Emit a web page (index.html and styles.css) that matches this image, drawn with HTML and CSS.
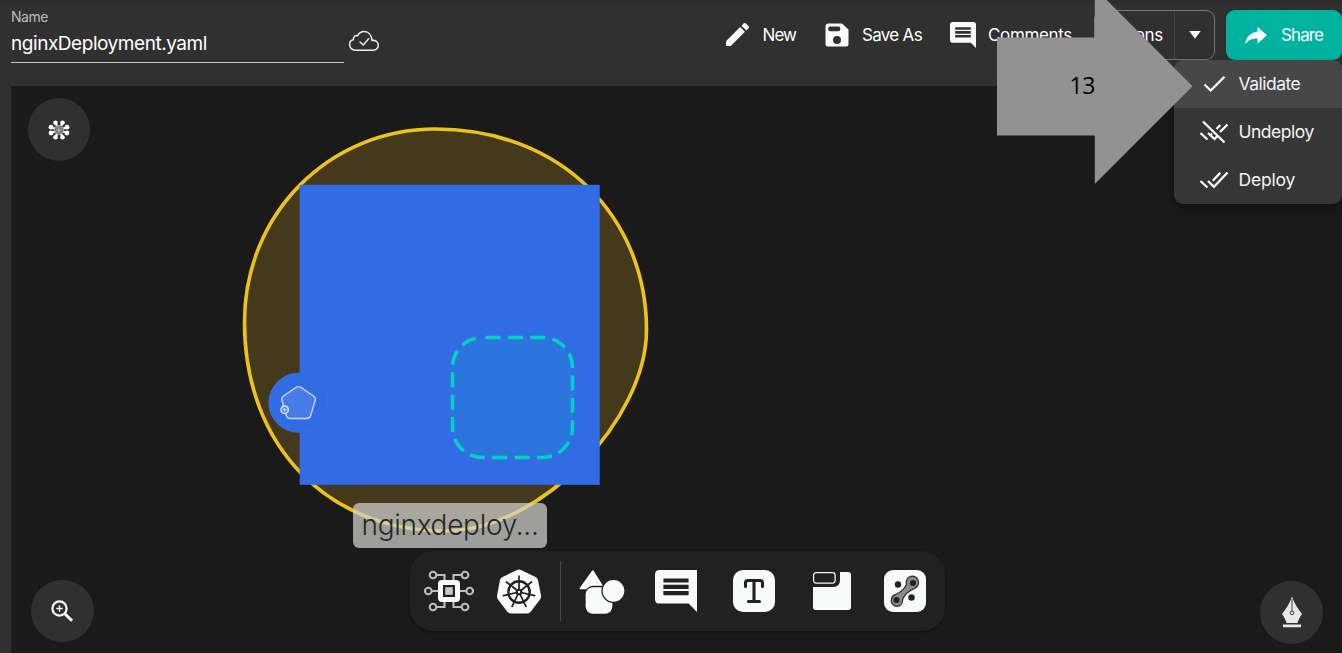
FILE: index.html
```html
<!DOCTYPE html>
<html lang="en">
<head>
<meta charset="utf-8">
<title>nginxDeployment.yaml</title>
<link rel="stylesheet" href="styles.css">
</head>
<body>
<div class="app">
  <header class="topbar">
    <div class="name-field">
      <span class="name-label">Name</span>
      <span class="name-value">nginxDeployment.yaml</span>
    </div>
    <svg class="cloud" viewBox="0 0 32 22" width="32" height="22"><path d="M7.5 20.2H25a5 5 0 0 0 .6-10c-.6 0-1 0-1.6.3C23.500 5 20.500 1.500 16.300 1.500c-3.300 0-5.500 1.700-6.600 4.200C6.800 5 5.300 7.200 5.300 9.800 3 10.300 1.600 12.500 1.600 14.600c0 3.200 2.600 5.600 5.900 5.600z"/><path d="M12 12l3.300 3 5.300-6.200"/></svg>
    <nav class="actions">
      <button class="tool new"><svg viewBox="3 3 18 18" width="23" height="23"><path d="M3 17.250V21h3.750L17.810 9.940l-3.750-3.750L3 17.250zM20.710 7.040a1 1 0 0 0 0-1.410l-2.340-2.340a1 1 0 0 0-1.410 0l-1.830 1.830 3.750 3.750 1.830-1.830z"/></svg><span>New</span></button>
      <button class="tool save"><svg viewBox="0 0 24 24" width="24" height="24"><path fill-rule="evenodd" d="M3.500 .5H17l6.500 6V21a2.500 2.500 0 0 1-2.500 2.500H3A2.500 2.500 0 0 1 .5 21V3.500a3 3 0 0 1 3-3zM5.500 3.500a2.400 2.400 0 0 0 0 4.800h7.500a2.400 2.400 0 0 0 0-4.800zM12 13a4 4 0 1 0 0 8 4 4 0 0 0 0-8z"/></svg><span>Save As</span></button>
      <button class="tool comments"><svg viewBox="2 2 20 20" width="26" height="26"><path d="M21.990 4c0-1.100-.89-2-1.990-2H4c-1.100 0-2 .9-2 2v12c0 1.100.9 2 2 2h14l4 4-.01-18zM18 14H6v-2h12v2zm0-3H6V9h12v2zm0-3H6V6h12v2z"/></svg><span>Comments</span></button>
      <div class="split"><button class="split-main">Actions</button><button class="split-arrow"><svg viewBox="0 0 12 8" width="12" height="8"><path d="M.3 0h11.400L6 7.800z"/></svg></button></div>
      <button class="share"><svg viewBox="0 0 24 19" width="24" height="19"><path d="M13.500 .8L23 9.200l-9.500 8.500v-5.200C7.500 12.500 4 14.500 .8 18.500 2 11.800 6 6.500 13.500 5.600z"/></svg><span>Share</span></button>
    </nav>
  </header>

  <main class="canvas">
    <svg class="diagram" viewBox="11 86 1331 567" width="1331" height="567">
      <path class="blob" d="M244.500 322C244.500 213 330 129 435 129C562 129 646.500 218 646.500 330C646.500 419 541 531 445 531C330 531 244.500 448 244.500 322Z"/>
      <rect x="299.700" y="184.800" width="300" height="300" fill="#326ce5"/>
      <rect class="slot" x="452.500" y="337.500" width="120" height="120" rx="30"/>
      <circle cx="298.500" cy="402.800" r="29.500" fill="#326ce5" stroke="#3970e8"/>
      <path class="pod" d="M296.500 387.200q2-1.200 4 0l13 8.800q2.300 1.600 1.800 4l-4.600 15.500q-.9 3-4 3H290q-2.500 0-3.500-2.500l-4.500-15.500q-.8-3 1.500-4.500z"/>
      <circle cx="284.600" cy="409.700" r="3.700" fill="#5c88e9" stroke="#dce6fb" stroke-width="1.500"/><path d="M282.700 409.700h3.800M284.600 408v3.500" stroke="#e5ecfc" stroke-width=".8"/>
    </svg>
    <div class="node-label">nginxdeploy...</div>

    <button class="round layers"><svg viewBox="-12 -12 24 24" width="24" height="24"><g fill="#fff"><circle cx="-3.500" cy="-7.300" r="2.300"/><circle cx="3.500" cy="-7.300" r="2.300"/><circle cx="-3.500" cy="7.300" r="2.300"/><circle cx="3.500" cy="7.300" r="2.300"/><circle cx="-8" cy="-2.800" r="2.400"/><circle cx="-8" cy="3" r="2.400"/><circle cx="8" cy="-2.800" r="2.400"/><circle cx="8" cy="3" r="2.400"/></g><path d="M-3.500-7L3.500 7M3.500-7L-3.500 7M-8-2.800L8 3M-8 3L8-2.800" stroke="#fff" stroke-width="2.200"/><circle r="5" fill="#aaa"/><g fill="none" stroke="#666" stroke-width=".8"><circle r="3.700"/><path d="M-2-2h4v4h-4z"/></g></svg></button>
    <button class="round zoom"><svg viewBox="0 0 24 24" width="24" height="24"><g fill="none" stroke="#fff"><circle cx="9.500" cy="9.500" r="7.100" stroke-width="2.200"/><path d="M14.500 14.500l7.500 7.300" stroke-width="3"/><path d="M6.300 9.500h6.400M9.500 6.300v6.400" stroke-width="1.300"/></g></svg></button>
    <button class="round pen"><svg viewBox="0 0 22 32" width="22" height="32"><path fill="#e8e8e8" d="M11 .5C13 7 17 13 21 18c-2 2.500-3.500 5.500-4.500 9h-11C4.500 23.500 3 20.500 1 18 5 13 9 7 11 .5zM2 28.500h18v2.800H2z"/><path d="M11 3v12" stroke="#444" stroke-width="1"/><circle cx="11" cy="16.800" r="1.800" fill="#e8e8e8" stroke="#333"/></svg></button>

    <div class="dock">
      <svg class="d-components" viewBox="0 0 50 42" width="50" height="42"><g fill="none" stroke="#bdbdbd" stroke-width="2.100"><path d="M12.500 5h8v7M37.500 5h-8v7M12.500 37h8v-7M37.500 37h-8v-7M8 21h7M35 21h7"/><circle cx="9" cy="5" r="3.300"/><circle cx="41" cy="5" r="3.300"/><circle cx="9" cy="37" r="3.300"/><circle cx="41" cy="37" r="3.300"/><circle cx="4.300" cy="21" r="3.300"/><circle cx="45.700" cy="21" r="3.300"/></g><rect x="14" y="10" width="22" height="22" rx="4" fill="#f7faf9"/><rect x="19" y="15" width="12" height="12" fill="#212121"/><rect x="21.200" y="17.200" width="7.600" height="7.600" fill="#c9c9c9"/></svg>
      <svg class="d-kube" viewBox="-22 -22.500 44 45" width="44" height="45"><path d="M-2-21.500q2-1 4 0l14.500 7q2 1 2.500 3L22 4q.4 2-1 4L11.500 20.500q-1.500 1.500-4 1.500h-15q-2.500 0-4-1.500L-21 8q-1.400-2-1-4l3-15.500q.5-2 2.500-3z" fill="#f7faf9"/><g fill="none" stroke="#212121"><circle cy=".5" r="10.700" stroke-width="2.400"/><path stroke-width="1.700" stroke-linecap="round" d="M0 .5V-15.500M0 .5L12.500-9.500M0 .5L15.600 4.100M0 .5L6.900 14.900M0 .5L-6.900 14.900M0 .5L-15.600 4.100M0 .5L-12.500-9.500"/></g><circle cy=".5" r="3.300" fill="#212121"/><circle cy=".5" r="1.200" fill="#f7faf9"/></svg>
      <i class="sep"></i>
      <svg class="d-shapes" viewBox="0 0 46 46" width="46" height="46"><g fill="#f7faf9" stroke="#212121" stroke-width="1.300"><path d="M12.500 1.500q1.300-2 2.600 0L25.500 18q1.500 3-1 3H2q-3-.5-1.500-3z"/><rect x="6" y="17.500" width="28" height="28" rx="8"/><circle cx="34.500" cy="21.800" r="11.500"/></g></svg>
      <svg class="d-comment" viewBox="2 2 20 20" width="42" height="42" fill="#f7faf9"><path d="M22 2H4c-1.200 0-2 .8-2 2v12c0 1.200.8 2 2 2h14l4 4zM18 14H6v-2h12zM18 11H6V9h12zM18 8H6V6h12z"/></svg>
      <svg class="d-text" viewBox="0 0 42 42" width="42" height="42"><rect width="42" height="42" rx="10" fill="#f7faf9"/><path d="M12.500 16.500v-3.500q0-2.500 2.500-2.500h12q2.500 0 2.500 2.500v3.500M21 10.500v21M15.500 31.500h11" fill="none" stroke="#212121" stroke-width="3.100" stroke-linecap="round"/></svg>
      <svg class="d-group" viewBox="0 0 38 38" width="38" height="38"><path fill="#f7faf9" d="M27 0h8q3 0 3 3v32q0 3-3 3H3q-3 0-3-3V15h20q7 0 7-7z"/><rect x=".6" y=".6" width="21.500" height="10.500" rx="2.500" fill="#212121" stroke="#f7faf9" stroke-width="1.200"/></svg>
      <svg class="d-edge" viewBox="0 0 42 42" width="42" height="42"><rect width="42" height="42" rx="9" fill="#f7faf9"/><g fill="#212121"><circle cx="14" cy="14.500" r="3.200"/><circle cx="27.500" cy="27.500" r="3.200"/></g><path d="M7.500 29a5.500 5.500 0 0 1 4-4.500q7-2.500 11-10a6.200 6.200 0 1 1 8 3.800q-9 4-12 11.200a5.700 5.700 0 1 1-11-.5z" fill="#8b8b8b" stroke="#333" stroke-width="1.300"/><circle cx="12.500" cy="30" r="3.100" fill="#212121"/><circle cx="29" cy="13" r="3.100" fill="#212121"/></svg>
    </div>
  </main>

  <ul class="menu">
    <li class="active"><svg viewBox="0 0 30 24" width="30" height="24"><path d="M5.500 12.500l6.200 6L25.500 4.700"/></svg><span class="m1">Validate</span></li>
    <li><svg viewBox="0 0 30 24" width="30" height="24"><path d="M1.500 13l7 6.500M9 13l6.500 6 3-3M21 12l7.500-7.500M12 14.500l1-1M17.500 9l3.800-4M4 1.500L25.500 22.500"/></svg><span class="m2">Undeploy</span></li>
    <li><svg viewBox="0 0 30 24" width="30" height="24"><path d="M1.500 13l7 6.500M9 13l6 5.800L28.500 4.500M13.800 12.800l7.500-8"/></svg><span class="m3">Deploy</span></li>
  </ul>

  <div class="callout"><svg viewBox="997 0 196 185" width="196" height="185"><path fill="#929292" d="M997 37.500H1094.800V-12L1192.500 86.200 1094.800 184V135.500H997z"/></svg><span>13</span></div>
</div>
</body>
</html>
```
FILE: styles.css
```css
* { box-sizing: border-box; }
body { margin: 0; background: #303030; font-family: Inter, "Open Sans", sans-serif; color: #fff; overflow: hidden; }
button { background: none; border: 0; padding: 0; color: inherit; font: inherit; letter-spacing: inherit; }
svg { display: block; flex: none; }
span { white-space: nowrap; }
.app { position: relative; width: 1342px; height: 653px; overflow: hidden; display: flex; flex-direction: column; }

.topbar { height: 86px; flex: none; display: flex; align-items: flex-start; padding-left: 11px; background: linear-gradient(#2b2b2b, #303030 5px); }
.name-field { width: 333px; height: 63px; border-bottom: 1px solid #c8c8c8; padding-top: 9px; display: flex; flex-direction: column; }
.name-label { font-size: 14px; line-height: 16px; color: #bdbdbd; letter-spacing: -.45px; }
.name-value { font-size: 19px; line-height: 24px; margin-top: 7px; letter-spacing: -.45px; }
.cloud { margin: 30px 0 0 4px; fill: none; stroke: #eee; stroke-width: 1.500; stroke-linecap: round; stroke-linejoin: round; }
.actions { display: flex; margin: 10px 0 0 auto; height: 50px; font-size: 17px; }
.actions svg { fill: #f7faf9; }
.tool { display: flex; align-items: center; height: 49px; }
.new { width: 99.500px; gap: 14px; letter-spacing: -.9px; }
.save { width: 125px; gap: 13px; letter-spacing: -.7px; }
.comments { width: 144px; gap: 12px; letter-spacing: -.35px; }
.split { display: flex; width: 121px; height: 50px; border: 1px solid #777; border-radius: 9px; margin-right: 11px; }
.split-main { width: 80px; padding-right: 11px; text-align: right; border-right: 1px solid #3f4555; letter-spacing: -.3px; }
.split-arrow { flex: 1; display: grid; place-items: center; }
.share { display: flex; align-items: center; gap: 13px; width: 116px; padding-left: 18px; background: #00b39f; border-radius: 9px; letter-spacing: -.9px; }

.canvas { position: relative; flex: 1; margin-left: 11px; background: #1a1a1a; overflow: hidden; }
.blob { fill: #443a1b; stroke: #edc31b; stroke-width: 3.600; }
.slot { fill: #2c75df; stroke: #00d3c0; stroke-width: 3.500; stroke-dasharray: 15 7.400; stroke-dashoffset: -3; }
.pod { fill: #487ce8; stroke: #c6d6f8; stroke-width: 1.400; }
.node-label { position: absolute; left: 342px; top: 417px; width: 194px; height: 45px; border-radius: 6px; background: rgba(207, 209, 205, .73); color: #252525; font-size: 28px; font-weight: 300; line-height: 44px; text-align: center; letter-spacing: -.3px; }
.round { position: absolute; width: 63px; height: 63px; border-radius: 50%; background: #303030; display: grid; place-items: center; }
.layers { left: 17px; top: 12px; width: 62px; }
.layers svg { margin-right: 1px; }
.zoom { left: 20px; top: 494px; height: 62px; }
.zoom svg { margin-right: 1px; }
.pen { left: 1249px; top: 495px; }
.pen svg { margin-bottom: 2px; }

.dock { position: absolute; left: 399px; top: 465px; width: 535px; height: 80px; border-radius: 23px; background: #212121; box-shadow: 0 1px 3px rgba(0, 0, 0, .4); display: flex; align-items: center; padding-left: 14px; }
.d-kube { margin-left: 23px; }
.sep { width: 1px; height: 60px; margin-left: 19px; background: #424858; }
.d-shapes { margin: 2px 0 0 18px; }
.d-comment { margin-left: 30px; }
.d-text { margin-left: 36px; }
.d-group { margin-left: 38px; }
.d-edge { margin-left: 33px; }

.menu { position: absolute; left: 1174px; top: 60px; width: 168px; height: 144px; margin: 0; padding: 0; list-style: none; background: #363636; border-radius: 9px; overflow: hidden; box-shadow: 0 4px 9px rgba(0, 0, 0, .4); font-size: 17.500px; color: #f2f2f2; }
.menu li { height: 48px; display: flex; align-items: center; padding-left: 25px; gap: 9.500px; }
.menu .active { background: #474747; }
.menu svg { fill: none; stroke: #f7faf9; stroke-width: 2.300; }
.menu span { letter-spacing: -.5px; padding-bottom: 1px; }
.menu .m3 { letter-spacing: -.2px; }

.callout { position: absolute; left: 997px; top: 0; }
.callout span { position: absolute; left: 72.500px; top: 72px; color: #000; font: 23px/27px "Open Sans", sans-serif; letter-spacing: -.5px; }
```
